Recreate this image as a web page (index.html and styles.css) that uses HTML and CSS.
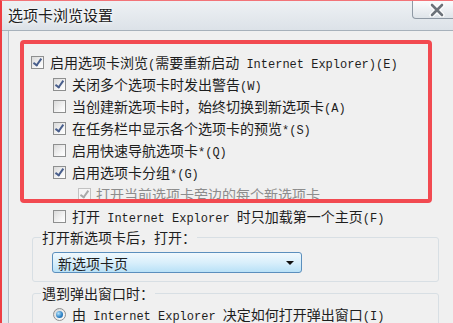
FILE: index.html
```html
<!DOCTYPE html>
<html lang="zh-CN">
<head>
  <meta charset="UTF-8" />
  <title>选项卡浏览设置</title>
  <link rel="stylesheet" href="styles.css">
</head>
<body>

  <div class="window">
    <div class="titlebar">
      <span class="title">选项卡浏览设置</span>
      <div class="close">
        <svg width="16" height="14" viewBox="0 0 16 14">
          <path d="M3 2 L13 12 M13 2 L3 12" stroke="#fff" stroke-width="5" stroke-linecap="round"/>
          <path d="M3 2 L13 12 M13 2 L3 12" stroke="#6d737a" stroke-width="2.6" stroke-linecap="round"/>
        </svg>
      </div>
    </div>

    <div class="client">
      <div class="row lvl0"><span class="cb checked"></span><span>启用选项卡浏览<span class="en">(</span>需要重新启动<span class="en"> Internet Explorer)(E)</span></span></div>
      <div class="row lvl1"><span class="cb checked"></span><span>关闭多个选项卡时发出警告<span class="en">(W)</span></span></div>
      <div class="row lvl1"><span class="cb"></span><span>当创建新选项卡时，始终切换到新选项卡<span class="en">(A)</span></span></div>
      <div class="row lvl1"><span class="cb checked"></span><span>在任务栏中显示各个选项卡的预览<span class="en">*(S)</span></span></div>
      <div class="row lvl1"><span class="cb"></span><span>启用快速导航选项卡<span class="en">*(Q)</span></span></div>
      <div class="row lvl1"><span class="cb checked"></span><span>启用选项卡分组<span class="en">*(G)</span></span></div>
      <div class="row lvl2 disabled"><span class="cb checked"></span><span>打开当前选项卡旁边的每个新选项卡</span></div>
      <div class="row lvl1"><span class="cb"></span><span>打开<span class="en"> Internet Explorer </span>时只加载第一个主页<span class="en">(F)</span></span></div>

      <fieldset class="group first">
        <legend>打开新选项卡后，打开：</legend>
        <div class="select">
          <span>新选项卡页</span>
          <span class="arrow"></span>
        </div>
      </fieldset>

      <fieldset class="group">
        <legend>遇到弹出窗口时：</legend>
        <div class="row radio-row"><span class="radio on"></span><span>由<span class="en"> Internet Explorer </span>决定如何打开弹出窗口<span class="en">(I)</span></span></div>
      </fieldset>
    </div>

    <!-- red annotation frame drawn over the dialog -->
    <div class="mark"></div>
  </div>

</body>
</html>
```

FILE: styles.css
```css
body {
  margin: 0;
  width: 453px;
  height: 323px;
  overflow: hidden;
  background: #f0f0f0;
  font-family: "Noto Sans CJK SC", sans-serif;
  font-size: 14px;
  color: #1e1e1e;
}
.window {
  position: relative;
  height: 322px;
  border-top: 1px solid #f27478;
  border-left: 2px solid #ee3d44;
  background: #e4e9ee;
}
.titlebar {
  display: flex;
  align-items: flex-start;
  height: 29px;
  padding-left: 6px;
  border-bottom: 1px solid #a7b1bb;
  background: linear-gradient(#eef1f4, #dce2e8);
}
.title {
  font-size: 15px;
  line-height: 28px;
  color: #202020;
  text-shadow: 0 0 6px #fff, 0 0 3px #fff;
}
.close {
  margin-left: auto;
  margin-right: -8px;
  width: 49px;
  height: 18px;
  display: flex;
  align-items: center;
  justify-content: center;
  border: 1px solid #8f99a4;
  border-top: none;
  border-radius: 0 0 4px 4px;
  background: linear-gradient(#fbfcfd, #dfe4e9);
  box-sizing: border-box;
}
.client {
  margin-left: 6px;
  height: 292px;
  padding-top: 20px;
  border-left: 1px solid #b3bcc6;
  background: #f0f0f0;
  box-sizing: border-box;
}
.row {
  display: flex;
  align-items: center;
  height: 22px;
  white-space: nowrap;
}
.lvl0 {
  padding-left: 22px;
  gap: 6px;
}
.lvl1 {
  padding-left: 44px;
  gap: 6px;
}
.lvl2 {
  padding-left: 69px;
  gap: 5px;
}
.en {
  font-family: "Liberation Mono", "Noto Sans CJK SC", monospace;
  font-size: 12px;
}
.cb {
  position: relative;
  flex: none;
  width: 13px;
  height: 13px;
  border: 1px solid #8e8f8f;
  background: linear-gradient(135deg, #dadada, #f7f7f7 70%, #fff);
  box-sizing: border-box;
}
.cb.checked::after {
  content: "";
  position: absolute;
  left: 3px;
  top: 0;
  width: 3px;
  height: 7px;
  border-right: 2px solid #485e8c;
  border-bottom: 2px solid #485e8c;
  transform: rotate(35deg);
}
.disabled {
  color: #8d8d8d;
}
.disabled .cb {
  border-color: #c2c2c2;
  background: #f5f5f5;
}
.disabled .cb.checked::after {
  border-color: #a9a9a9;
}
.group {
  margin: 0 14px 0 23px;
  padding: 0 8px 8px;
  border: 1px solid #d8dfe4;
  border-radius: 3px;
}
.group + .group {
  margin-top: 1px;
}
.group legend {
  padding: 0 1px;
  line-height: 20px;
}
.select {
  display: flex;
  align-items: center;
  justify-content: space-between;
  margin: 5px 0 0 11px;
  width: 250px;
  height: 21px;
  padding: 0 7px 0 5px;
  border: 1px solid #5b8fbd;
  border-radius: 3px;
  background: linear-gradient(#f0f8fd, #d9effb 50%, #b9e1f7);
  box-sizing: border-box;
}
.arrow {
  width: 0;
  height: 0;
  border-left: 4px solid transparent;
  border-right: 4px solid transparent;
  border-top: 4px solid #111;
}
.radio-row {
  padding-left: 12px;
  gap: 6px;
}
.radio {
  position: relative;
  flex: none;
  width: 13px;
  height: 13px;
  border: 1px solid #8e8f8f;
  border-radius: 50%;
  background: linear-gradient(135deg, #d6d6d6, #fff);
  box-sizing: border-box;
}
.radio.on::after {
  content: "";
  position: absolute;
  left: 2px;
  top: 2px;
  width: 7px;
  height: 7px;
  border-radius: 50%;
  background: radial-gradient(circle at 35% 35%, #b6e4fb, #2a7fc4 60%, #1a5d9a);
}
.mark {
  position: absolute;
  left: 18px;
  top: 39px;
  width: 412px;
  height: 163px;
  border: 4px solid #f24a51;
  border-radius: 4px;
  box-sizing: border-box;
}
```
